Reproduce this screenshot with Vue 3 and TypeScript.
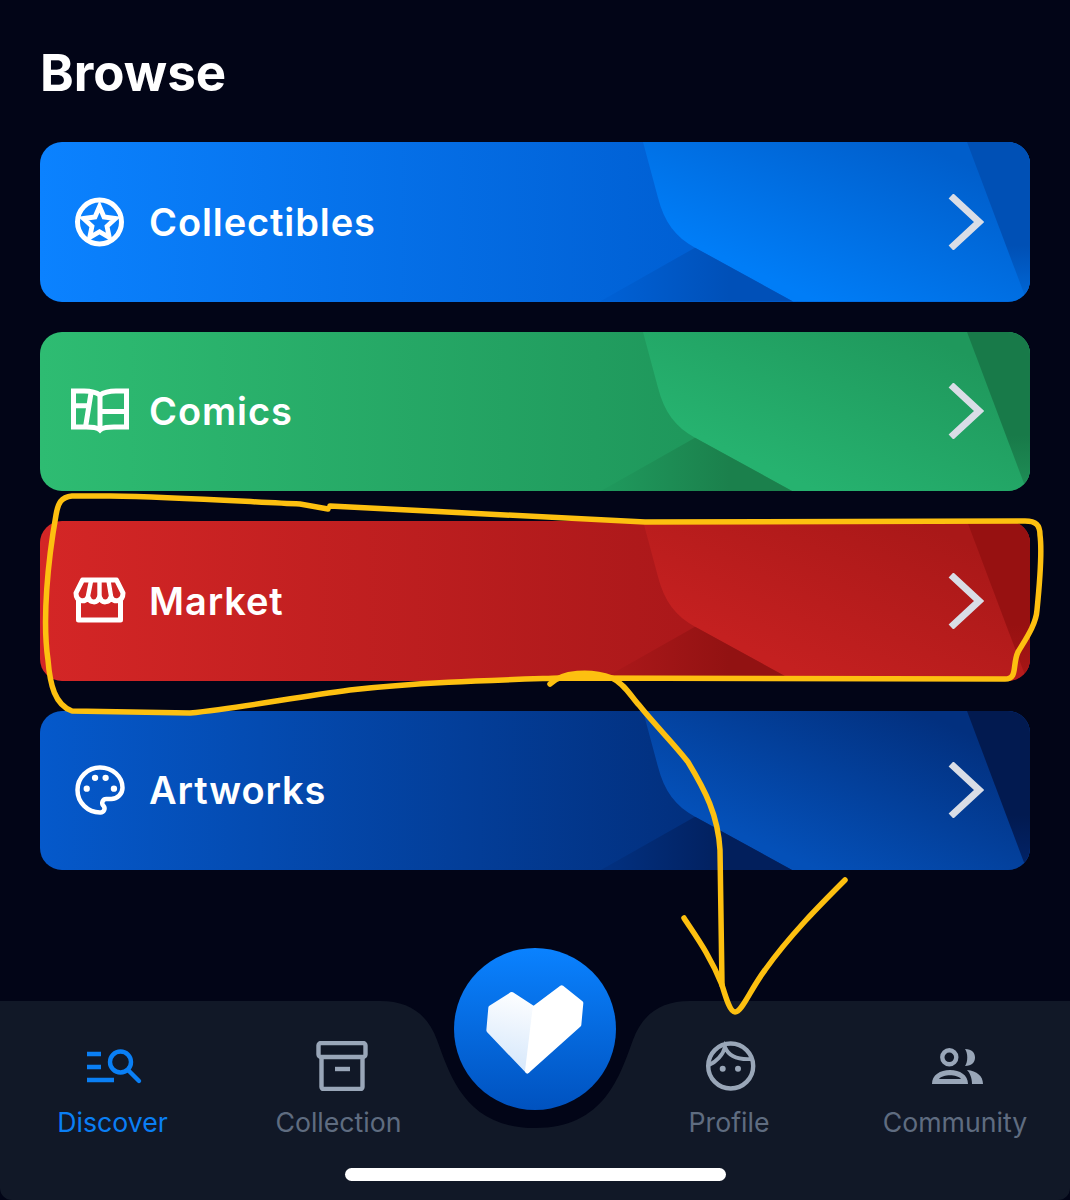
<template>
  <div class="screen">
    <h1 class="title">Browse</h1>

    <div class="cards">
      <div v-for="card in cards" :key="card.id" class="card" :style="{ background: `linear-gradient(90deg, ${card.from}, ${card.to} 65%)` }">
        <svg class="deco" viewBox="0 0 990 160" preserveAspectRatio="none">
          <defs>
            <linearGradient :id="`shape-${card.id}`" gradientUnits="userSpaceOnUse" x1="880" y1="0" x2="800" y2="170">
              <stop offset="0" :stop-color="card.shapeTop" />
              <stop offset="1" :stop-color="card.shapeBottom" />
            </linearGradient>
            <linearGradient :id="`tri-${card.id}`" gradientUnits="userSpaceOnUse" x1="570" y1="0" x2="690" y2="0">
              <stop offset="0" :stop-color="card.to" />
              <stop offset="1" :stop-color="card.tri" />
            </linearGradient>
            <linearGradient :id="`corner-${card.id}`" x1="0" y1="0" x2="0" y2="1">
              <stop offset="0" :stop-color="card.corner" />
              <stop offset="0.65" :stop-color="card.corner" />
              <stop offset="1" :stop-color="card.cornerEnd" />
            </linearGradient>
          </defs>
          <path d="M603 0 L618 56 C624 80 636 96 655 106 L753 160 H990 V0Z" :fill="`url(#shape-${card.id})`" />
          <path d="M655 106 L560 160 H753Z" :fill="`url(#tri-${card.id})`" />
          <path d="M927 0 L984 152 L990 160 V0Z" :fill="`url(#corner-${card.id})`" />
        </svg>

        <svg class="card-icon" viewBox="0 0 60 60" fill="none" stroke="#fff" stroke-width="5" stroke-linejoin="round" stroke-linecap="round">
          <template v-if="card.id === 'collectibles'">
            <circle cx="29.5" cy="30" r="22" stroke-width="5" />
            <path d="M29.5 14.5 L34 25 L45.5 26.5 L37 34.3 L39.3 45.5 L29.5 39.7 L19.7 45.5 L22 34.3 L13.5 26.5 L25 25Z" stroke-width="4.8" stroke-linejoin="miter" stroke-miterlimit="10" />
          </template>
          <template v-else-if="card.id === 'comics'">
            <path d="M3.5 10 H14 C20 10 26 11 30 14 C34 11 40 10 46 10 H56.5 V46 H44 C38 46 33 46 30 49 C27 46 22 46 16 46 H3.5Z" stroke-linejoin="miter" />
            <path d="M30 14 V48 M30 30.5 H56 M3 24.75 H19 M21 12 L15.7 45" stroke-linecap="butt" />
          </template>
          <template v-else-if="card.id === 'market'">
            <path d="M12.5 9 H46.5 L53 22 C53 31 43 32 41 26 C39 32 32 33 29.5 26 C27 33 20 32 18 26 C16 32 6 31 6 22Z" />
            <path d="M21 10 L18 25 M29.5 10 V25 M38.5 10 L41 25" stroke-width="4.4" />
            <path d="M8.5 30 V49 H50.5 V30" />
          </template>
          <template v-else>
            <g transform="translate(3 3) scale(2.25)" stroke-width="2">
              <path d="M12 22a1 1 0 0 1 0-20 10 9 0 0 1 10 9 5 5 0 0 1-5 5h-2.25a1.75 1.75 0 0 0-1.4 2.8l.3.4a1.75 1.75 0 0 1-1.4 2.8z" />
              <circle cx="6.1" cy="11.4" r="1.4" fill="#fff" stroke="none" />
              <circle cx="9.8" cy="6.6" r="1.4" fill="#fff" stroke="none" />
              <circle cx="14.5" cy="6.6" r="1.4" fill="#fff" stroke="none" />
              <circle cx="18.2" cy="11.4" r="1.4" fill="#fff" stroke="none" />
            </g>
          </template>
        </svg>

        <span class="card-label">{{ card.label }}</span>

        <svg class="chevron" width="36" height="56" viewBox="0 0 36 56" fill="none">
          <path d="M3 2 L31 28 L3 54" stroke="#d9dde6" stroke-width="7" />
        </svg>
      </div>
    </div>

    <nav class="tabbar">
      <svg class="tabbar-bg" viewBox="0 0 1070 199">
        <path d="M0 0 H380 C410 0 428 14 437 39 C450 74 465 127 535 127 C605 127 620 74 633 39 C642 14 660 0 690 0 H1070 V187 A12 12 0 0 1 1058 199 H12 A12 12 0 0 1 0 187Z" fill="#111827" />
      </svg>

      <div class="tabs">
        <div v-for="tab in tabs" :key="tab.id" class="tab" :class="{ active: tab.id === 'discover', spacer: tab.id === 'spacer' }">
          <template v-if="tab.id !== 'spacer'">
            <svg class="tab-icon" width="60" height="50" viewBox="0 0 60 50" fill="none" stroke="currentColor" stroke-width="4.4">
              <template v-if="tab.id === 'discover'">
                <path d="M4 13 H18 M4 26 H18 M4 39 H31" />
                <circle cx="37.5" cy="21" r="10.5" />
                <path d="M45 29 L56 40" stroke-linecap="round" />
              </template>
              <template v-else-if="tab.id === 'collection'">
                <rect x="9.5" y="2" width="47" height="14" rx="2.5" />
                <path d="M12.5 16 V46 A2 2 0 0 0 14.5 48 H51.5 A2 2 0 0 0 53.5 46 V16" />
                <path d="M26 28 H41" />
              </template>
              <template v-else-if="tab.id === 'profile'">
                <circle cx="31.7" cy="25" r="22.5" />
                <path d="M10 24 C17 21 24 14 26 6 C29 14 38 19 53 18" stroke-width="3.8" />
                <circle cx="23.7" cy="27.7" r="3" fill="currentColor" stroke="none" />
                <circle cx="39" cy="27.7" r="3" fill="currentColor" stroke="none" />
              </template>
              <template v-else>
                <circle cx="24.3" cy="16.3" r="7" />
                <g fill="currentColor" stroke="none">
                  <path d="M40 8 C47 8 50 12 50 16.5 C50 21 47 25 40 25 C43 21 43 12 40 8Z" />
                  <path fill-rule="evenodd" d="M7 43 C7 34 15 29 25 29 C35 29 43 34 43 43Z M14 38 H36 C32 33 18 33 14 38Z" />
                  <path d="M42 29 C52 30 58 35 58 43 H47 C47 37 45 32 42 29Z" />
                </g>
              </template>
            </svg>
            <span class="tab-label">{{ tab.label }}</span>
          </template>
        </div>
      </div>

      <div class="home-indicator"></div>

      <div class="center-button">
        <svg width="162" height="162" viewBox="102 53 486 486">
          <defs>
            <linearGradient id="heart-left" gradientUnits="userSpaceOnUse" x1="300" y1="180" x2="250" y2="420">
              <stop offset="0" stop-color="#ffffff" />
              <stop offset="1" stop-color="#d5e7fb" />
            </linearGradient>
          </defs>
          <path d="M343 236 L275 192 L212 232 L206 300 L322 422Z" fill="url(#heart-left)" stroke="url(#heart-left)" stroke-width="14" stroke-linejoin="round" />
          <path d="M345 232 L425 172 L483 218 L477 283 L322 422Z" fill="#fff" stroke="#fff" stroke-width="14" stroke-linejoin="round" />
        </svg>
      </div>
    </nav>

    <svg class="scribble" viewBox="0 0 1070 1200" fill="none" stroke="#fdc010" stroke-width="5.5" stroke-linecap="round" stroke-linejoin="round">
      <path d="M328 509 L300 504 C250 502 180 497 110 496 L72 496 C61 497 58 503 56 515 C48 560 42 620 48 660 C50 685 55 705 72 711 L190 713 C240 708 290 698 350 690 C420 682 500 680 560 678 L1005 679 C1018 679 1012 665 1018 652 C1025 640 1036 625 1037 610 C1040 580 1042 550 1040 535 C1040 525 1036 521 1025 521 L645 522 C560 518 450 512 330 506" />
      <path d="M550 684 C562 672 590 670 612 678 C625 684 632 698 639 705 C655 725 675 745 688 762 C705 790 718 815 720 850 L722 985" />
      <path d="M684 918 C695 935 710 955 722 985 C726 998 730 1012 735 1012 C742 1012 750 990 765 970 C790 935 820 905 845 880" />
    </svg>
  </div>
</template>

<script setup lang="ts">
interface Card {
  id: string;
  label: string;
  from: string;
  to: string;
  shapeTop: string;
  shapeBottom: string;
  tri: string;
  corner: string;
  cornerEnd: string;
}

const cards: Card[] = [
  { id: "collectibles", label: "Collectibles", from: "#0b82ff", to: "#0060d4", shapeTop: "#005ecb", shapeBottom: "#007df7", tri: "#0050b8", corner: "#0050b5", cornerEnd: "#0068d8" },
  { id: "comics", label: "Comics", from: "#2ebc72", to: "#1f985c", shapeTop: "#1f985c", shapeBottom: "#26b26f", tri: "#1b804c", corner: "#187a49", cornerEnd: "#1f8f57" },
  { id: "market", label: "Market", from: "#d42626", to: "#ab181a", shapeTop: "#a91818", shapeBottom: "#c42020", tri: "#921212", corner: "#971111", cornerEnd: "#a81616" },
  { id: "artworks", label: "Artworks", from: "#0559cb", to: "#02307f", shapeTop: "#02307f", shapeBottom: "#0450b8", tri: "#021f5c", corner: "#021a50", cornerEnd: "#02246a" },
];

const tabs = [
  { id: "discover", label: "Discover" },
  { id: "collection", label: "Collection" },
  { id: "spacer", label: "" },
  { id: "profile", label: "Profile" },
  { id: "community", label: "Community" },
];
</script>

<style>
html,
body {
  margin: 0;
  background: #020517;
}
</style>

<style scoped>
.screen {
  position: relative;
  width: 1070px;
  height: 1200px;
  overflow: hidden;
  background: #020517;
  display: flex;
  flex-direction: column;
  font-family: Inter, "Noto Sans", sans-serif;
}

.title {
  margin: 0;
  padding: 42px 40px 0;
  height: 142px;
  box-sizing: border-box;
  color: #fff;
  font-size: 51px;
  font-weight: 700;
  line-height: 62px;
}

.cards {
  display: flex;
  flex-direction: column;
  gap: 30px;
  padding: 0 40px;
}

.card {
  position: relative;
  height: 159.5px;
  border-radius: 22px;
  overflow: hidden;
  display: flex;
  align-items: center;
  padding: 0 46px 0 30px;
}

.deco {
  position: absolute;
  inset: 0;
  width: 100%;
  height: 100%;
}

.card-icon {
  position: relative;
  width: 60px;
  height: 60px;
  flex: none;
}

.card-label {
  position: relative;
  margin-left: 19px;
  color: #fff;
  font-size: 38px;
  font-weight: 600;
  letter-spacing: 0.9px;
}

.chevron {
  position: relative;
  margin-left: auto;
  flex: none;
}

.tabbar {
  position: relative;
  margin-top: auto;
  height: 199px;
}

.tabbar-bg {
  position: absolute;
  inset: 0;
  width: 100%;
  height: 100%;
}

.tabs {
  position: relative;
  display: grid;
  grid-template-columns: 225px 227px 164px 226px 226px;
  padding-top: 40px;
}

.tab {
  display: flex;
  flex-direction: column;
  align-items: center;
  gap: 15px;
  color: #99a6b8;
}

.tab.active {
  color: #0a7ff5;
}

.tab-label {
  color: #5f6c80;
  font-size: 26.7px;
  line-height: 32px;
}

.tab.active .tab-label {
  color: #0a7ff5;
}

.home-indicator {
  position: relative;
  width: 381px;
  height: 13px;
  margin: 30px auto 0;
  border-radius: 7px;
  background: #fff;
}

.center-button {
  position: absolute;
  left: 454px;
  top: -53px;
  width: 162px;
  height: 162px;
  border-radius: 50%;
  background: linear-gradient(180deg, #0a82ff, #0052bf);
}

.scribble {
  position: absolute;
  inset: 0;
  width: 100%;
  height: 100%;
  pointer-events: none;
}
</style>
